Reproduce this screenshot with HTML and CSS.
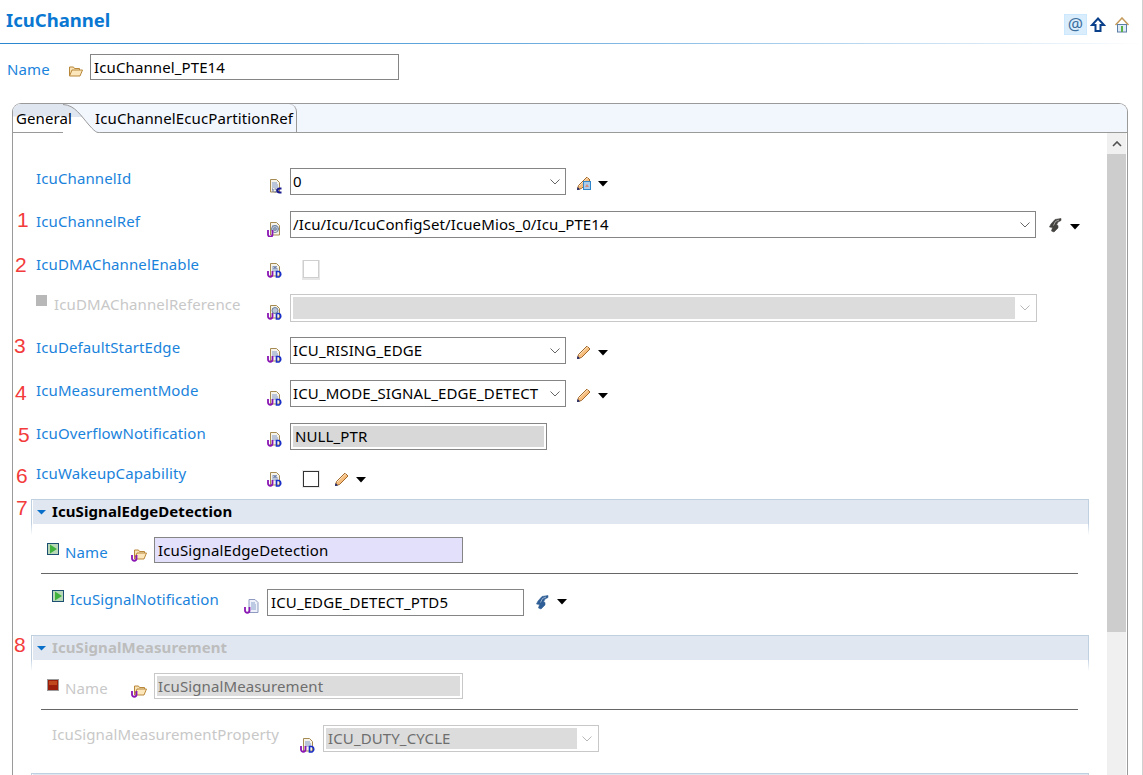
FILE: index.html
```html
<!DOCTYPE html>
<html lang="en">
<head>
<meta charset="utf-8">
<title>IcuChannel</title>
<link rel="stylesheet" href="styles.css">
</head>
<body>
<svg class="defs" width="0" height="0" aria-hidden="true">
  <defs>
    <linearGradient id="tabfill" gradientUnits="userSpaceOnUse" x1="0" y1="0" x2="0" y2="29">
      <stop offset="0" stop-color="#dfe6ef"/><stop offset=".44" stop-color="#dfe6ef"/><stop offset=".45" stop-color="#fff"/><stop offset="1" stop-color="#fff"/>
    </linearGradient>
    <symbol id="doc" viewBox="0 0 16 16">
      <path d="M3.500 1.500h6l3 3v9.500h-9z" fill="#f6f3ea" stroke="#a58a52"/>
      <path d="M5 5h5M5 7h6M5 9h6" stroke="#7f97c8"/>
    </symbol>
    <symbol id="i-int" viewBox="0 0 16 16">
      <use href="#doc"/>
      <path d="M5 11h1v3M7.500 11h2v3h-2" stroke="#5d6f9c" fill="none"/>
      <path d="M14.500 10.500h-2a2 2 0 0 0 0 4h2" fill="none" stroke="#1a1a90" stroke-width="2"/>
    </symbol>
    <symbol id="i-ref" viewBox="0 0 16 16">
      <use href="#doc"/>
      <circle cx="8" cy="8" r="3.500" fill="none" stroke="#6a7f9a"/>
      <circle cx="8" cy="8" r="1.300" fill="none" stroke="#6a7f9a"/>
      <path d="M1 9v4.500a2 2 0 0 0 4.500 0V9" fill="none" stroke="#8a16b4" stroke-width="1.800"/>
    </symbol>
    <symbol id="i-ud" viewBox="0 0 16 16">
      <use href="#doc"/>
      <path d="M1 9v3.500a2.200 2.200 0 0 0 4.500 0V9" fill="none" stroke="#8a16b4" stroke-width="1.800"/>
      <path d="M9.500 9.500h2.500a3 3 0 0 1 0 5.500h-2.500z" fill="none" stroke="#1a2fc8" stroke-width="1.600"/>
    </symbol>
    <symbol id="i-refud" viewBox="0 0 16 16">
      <use href="#i-ud"/>
      <circle cx="8" cy="6.500" r="3" fill="none" stroke="#6a7f9a"/>
    </symbol>
    <symbol id="i-bool" viewBox="0 0 16 16">
      <use href="#i-ud"/>
      <path d="M6.500 4l3 3M9.500 4l-3 3" stroke="#5d6f9c"/>
    </symbol>
    <symbol id="i-folder" viewBox="0 0 16 16">
      <path d="M1.500 13v-9h4l1 1.500h5v2.500" fill="#f7e3b5" stroke="#b9873a"/>
      <path d="M1.500 13l2.500-6h10.500l-2.500 6z" fill="#fbe7bb" stroke="#b9873a"/>
    </symbol>
    <symbol id="i-folderu" viewBox="0 0 16 16">
      <path d="M3.500 13v-9h4l1 1.500h5v2.500" fill="#f7e3b5" stroke="#b9873a"/>
      <path d="M3.500 13l2.500-6h9.500l-2.500 6z" fill="#fbe7bb" stroke="#b9873a"/>
      <path d="M1 9v3.500a2.200 2.200 0 0 0 4.500 0V9" fill="none" stroke="#8a16b4" stroke-width="1.800"/>
    </symbol>
    <symbol id="i-page" viewBox="0 0 16 16">
      <path d="M5 1.500h6l3 3v10h-9z" fill="#eef1fa" stroke="#8f9ac0"/>
      <path d="M7 5h4M7 7h5M7 9h5M7 11h5" stroke="#8ba0cc"/>
      <path d="M1 9v3.500a2.200 2.200 0 0 0 4.500 0V9" fill="none" stroke="#8a16b4" stroke-width="1.800"/>
    </symbol>
    <symbol id="i-pencil" viewBox="0 0 16 16">
      <path d="M1.500 14.500l1-4L11 2l3 3-8.500 8.500z" fill="#f6bd7c" stroke="#a2692c"/>
      <path d="M3 11l9-8.500" stroke="#fbe6c8"/>
      <path d="M1 15l.6-3 2.400 2.400z" fill="#16226e"/>
    </symbol>
    <symbol id="i-wand" viewBox="0 0 16 16">
      <use href="#i-pencil"/>
      <rect x="7.500" y="6.500" width="7" height="8" fill="#a9cdea" stroke="#2f86cc"/>
      <path d="M9 12l2-3 2 3z" fill="#d98b7a"/>
    </symbol>
    <symbol id="i-bolt" viewBox="0 0 16 16">
      <path d="M13 1.500L7 2.500 3 7l-1.500 3 3 .5-1 3.500 2.500 1L10 11V8.500L8.500 8 10 5l3-1.500z" fill="currentColor" stroke="currentColor" stroke-width=".6"/>
      <path d="M11 3L7.500 4.500 5.500 8.500" fill="none" stroke="#fff" stroke-opacity=".5"/>
    </symbol>
    <symbol id="i-green" viewBox="0 0 12 12">
      <rect x=".5" y=".5" width="11" height="11" fill="#b8d8b8" stroke="#1c4f72"/>
      <path d="M3 1.500l7 4.500-7 4.500z" fill="#3fb23c"/>
    </symbol>
    <symbol id="i-red" viewBox="0 0 12 12">
      <rect x=".5" y=".5" width="11" height="11" fill="#9b1d0c" stroke="#9a9a9a"/>
      <rect x="2" y="2" width="8" height="4" fill="#c0481e"/>
    </symbol>
    <symbol id="i-drop" viewBox="0 0 10 6"><path d="M0 0h10L5 5.500z" fill="#000"/></symbol>
    <symbol id="i-chev" viewBox="0 0 10 6"><path d="M.5 .5L5 5 9.500 .5" fill="none" stroke="currentColor"/></symbol>
    <symbol id="i-sec" viewBox="0 0 9 5"><path d="M0 0h9L4.500 4.500z" fill="#0a6fc9"/></symbol>
  </defs>
</svg>

<div class="page">
  <header class="head">
    <h1 class="title">IcuChannel</h1>
    <div class="tools">
      <span class="tool-at">@</span>
      <svg class="tool" viewBox="0 0 16 16"><path d="M8 1.500L14 8h-3.500v6h-5V8H2z" fill="#fff" stroke="#0a3f8a" stroke-width="2"/></svg>
      <svg class="tool" viewBox="0 0 16 16"><path d="M1.500 8l6.500-7 6.500 7" fill="none" stroke="#c49a5a" stroke-width="1.500"/><rect x="3.500" y="7.500" width="9" height="7.500" fill="#dfeaf7" stroke="#5c7fa8"/><rect x="7" y="9" width="2" height="6" fill="#5cb04a"/></svg>
    </div>
  </header>

  <div class="name-row">
    <span class="lbl name-lbl">Name</span>
    <svg class="ico"><use href="#i-folder"/></svg>
    <div class="box name-box">IcuChannel_PTE14</div>
  </div>

  <section class="folder">
    <div class="tabs">
      <div class="tab tab-on">General</div>
      <svg class="tab-curve" viewBox="0 0 40 29" preserveAspectRatio="none"><path d="M0 .5C12 1 18 12 26 21S34 28.500 40 28.500V29H0z" fill="url(#tabfill)"/><path d="M0 .5C12 1 18 12 26 21S34 28.500 40 28.500" fill="none" stroke="#9a9a9a"/></svg>
      <div class="tab tab-off">IcuChannelEcucPartitionRef</div>
    </div>
    <div class="body">
      <div class="form">
        <span class="num n1">1</span><span class="num n2">2</span><span class="num n3">3</span><span class="num n4">4</span>
        <span class="num n5">5</span><span class="num n6">6</span><span class="num n7">7</span><span class="num n8">8</span>

        <div class="row">
          <span class="lbl col">IcuChannelId</span>
          <svg class="ico"><use href="#i-int"/></svg>
          <div class="box combo w276"><span class="val">0</span><svg class="chev"><use href="#i-chev"/></svg></div>
          <svg class="act"><use href="#i-wand"/></svg><svg class="drop"><use href="#i-drop"/></svg>
        </div>
        <div class="row">
          <span class="lbl col">IcuChannelRef</span>
          <svg class="ico"><use href="#i-ref"/></svg>
          <div class="box combo w746"><span class="val">/Icu/Icu/IcuConfigSet/IcueMios_0/Icu_PTE14</span><svg class="chev"><use href="#i-chev"/></svg></div>
          <svg class="act bolt-dark"><use href="#i-bolt"/></svg><svg class="drop"><use href="#i-drop"/></svg>
        </div>
        <div class="row row-short">
          <span class="lbl col">IcuDMAChannelEnable</span>
          <svg class="ico"><use href="#i-bool"/></svg>
          <span class="check check-off"></span>
        </div>
        <div class="row">
          <span class="col col-off"><span class="square"></span><span class="lbl lbl-off">IcuDMAChannelReference</span></span>
          <svg class="ico"><use href="#i-refud"/></svg>
          <div class="box combo w747 box-off"><span class="val fill"></span><svg class="chev"><use href="#i-chev"/></svg></div>
        </div>
        <div class="row">
          <span class="lbl col">IcuDefaultStartEdge</span>
          <svg class="ico"><use href="#i-ud"/></svg>
          <div class="box combo w276"><span class="val">ICU_RISING_EDGE</span><svg class="chev"><use href="#i-chev"/></svg></div>
          <svg class="act"><use href="#i-pencil"/></svg><svg class="drop"><use href="#i-drop"/></svg>
        </div>
        <div class="row">
          <span class="lbl col">IcuMeasurementMode</span>
          <svg class="ico"><use href="#i-ud"/></svg>
          <div class="box combo w276"><span class="val">ICU_MODE_SIGNAL_EDGE_DETECT</span><svg class="chev"><use href="#i-chev"/></svg></div>
          <svg class="act"><use href="#i-pencil"/></svg><svg class="drop"><use href="#i-drop"/></svg>
        </div>
        <div class="row row-short">
          <span class="lbl col">IcuOverflowNotification</span>
          <svg class="ico"><use href="#i-ud"/></svg>
          <div class="box w257 box-gray"><span class="val fill">NULL_PTR</span></div>
        </div>
        <div class="row row-wake">
          <span class="lbl col">IcuWakeupCapability</span>
          <svg class="ico"><use href="#i-bool"/></svg>
          <span class="check"></span>
          <svg class="act act-check"><use href="#i-pencil"/></svg><svg class="drop"><use href="#i-drop"/></svg>
        </div>

        <section class="sec">
          <div class="sec-head"><svg class="sec-arrow"><use href="#i-sec"/></svg><span class="sec-title">IcuSignalEdgeDetection</span></div>
          <div class="sec-row">
            <svg class="state"><use href="#i-green"/></svg>
            <span class="lbl sec-name">Name</span>
            <svg class="ico"><use href="#i-folderu"/></svg>
            <div class="box name-box box-lilac">IcuSignalEdgeDetection</div>
          </div>
          <div class="rule"></div>
          <div class="sec-row sec-row-sub">
            <svg class="state state-sub"><use href="#i-green"/></svg>
            <span class="lbl sig-lbl">IcuSignalNotification</span>
            <svg class="ico"><use href="#i-page"/></svg>
            <div class="box w257">ICU_EDGE_DETECT_PTD5</div>
            <svg class="act bolt-blue"><use href="#i-bolt"/></svg><svg class="drop"><use href="#i-drop"/></svg>
          </div>
        </section>

        <section class="sec">
          <div class="sec-head"><svg class="sec-arrow"><use href="#i-sec"/></svg><span class="sec-title sec-title-off">IcuSignalMeasurement</span></div>
          <div class="sec-row">
            <svg class="state"><use href="#i-red"/></svg>
            <span class="lbl lbl-off sec-name">Name</span>
            <svg class="ico"><use href="#i-folderu"/></svg>
            <div class="box name-box box-off"><span class="val fill">IcuSignalMeasurement</span></div>
          </div>
          <div class="rule"></div>
          <div class="sec-row sec-row-sub">
            <span class="lbl lbl-off meas-lbl">IcuSignalMeasurementProperty</span>
            <svg class="ico"><use href="#i-ud"/></svg>
            <div class="box combo w276 box-off"><span class="val fill">ICU_DUTY_CYCLE</span><svg class="chev"><use href="#i-chev"/></svg></div>
          </div>
        </section>
        <section class="sec sec-next"><div class="sec-head"></div></section>
      </div>
      <div class="scroll">
        <div class="scroll-up"><svg class="scroll-chev" viewBox="0 0 10 6"><path d="M1 5L5 1l4 4" fill="none" stroke="#505050" stroke-width="1.600"/></svg></div>
        <div class="scroll-thumb"></div>
      </div>
    </div>
  </section>
</div>
</body>
</html>
```
FILE: styles.css
```css
* { box-sizing: border-box; }
html, body { margin: 0; height: 100%; background: #fff; overflow: hidden; }
body { font-family: "Noto Sans", "Open Sans", sans-serif; font-size: 15px; letter-spacing: .115px; color: #000; }
.defs { position: absolute; }
.page { width: 1143px; height: 775px; border-right: 1px solid #d0d0d0; display: flex; flex-direction: column; overflow: hidden; }

.head {
  height: 44px; flex: none; display: flex; justify-content: space-between; align-items: flex-start;
  padding: 7px 12px 0 6px; border-bottom: 1px solid transparent;
  border-image: linear-gradient(90deg, #2b86cf 0%, #69abdf 45%, #eef5fb 95%, #fff 100%) 1;
}
.title { margin: 0; font-size: 18.5px; letter-spacing: 0; line-height: 26px; font-weight: 700; color: #0a78d2; }
.tools { display: flex; align-items: center; gap: 8px; margin-top: 7px; }
.tool-at { width: 23px; height: 21px; background: #d9edfc; border: 1px solid #cce8ff; color: #3d6f9e; font-size: 17px; line-height: 17px; text-align: center; margin-right: -5px; }
.tool { width: 16px; height: 16px; }

.lbl { color: #1a83dc; white-space: nowrap; line-height: 20px; }
.lbl-off { color: #c8c8c8; }
.ico { width: 16px; height: 16px; flex: none; }

.box { height: 27px; border: 1px solid #858585; background: #fff; padding: 0 3px; line-height: 24px; white-space: nowrap; overflow: hidden; flex: none; }
.name-row { height: 59px; flex: none; padding: 10px 0 0 7px; display: flex; align-items: flex-start; }
.name-lbl { width: 61px; margin-top: 5px; }
.name-row .ico { margin-top: 9px; margin-right: 6px; }
.name-box { width: 309px; height: 26px; }

.folder { flex: 1; margin: 0 14px 0 12px; border: 1px solid #9a9a9a; border-bottom: 0; border-radius: 9px 9px 0 0; display: flex; flex-direction: column; min-height: 0; }
.tabs { height: 29px; flex: none; background: #f2f6fd; border-bottom: 1px solid #9a9a9a; border-radius: 8px 8px 0 0; display: flex; }
.tab { height: 28px; line-height: 28px; white-space: nowrap; }
.tab-on { width: 50px; padding-left: 3px; background: linear-gradient(#dfe6ef 0, #dfe6ef 12px, #fff 13px); border-radius: 8px 0 0 0; position: relative; z-index: 1; }
.tab-curve { width: 40px; height: 29px; flex: none; }
.tab-off { width: 202px; margin-left: -8px; border-right: 1px solid #9a9a9a; border-radius: 0 8px 0 0; position: relative; }

.body { flex: 1; display: flex; min-height: 0; }
.form { flex: 1; position: relative; padding: 35px 0 0 23px; min-width: 0; }
.scroll { width: 19px; flex: none; margin-right: 1px; background: #f0f0f0; }
.scroll-up { height: 21px; display: flex; align-items: center; justify-content: center; }
.scroll-chev { width: 10px; height: 6px; }
.scroll-thumb { height: 478px; background: #cdcdcd; }

.row { height: 43px; display: flex; align-items: flex-start; }
.row-short { height: 40px; }
.row-wake { height: 36px; }
.col { width: 231px; flex: none; }
.col-off { display: flex; align-items: flex-start; }
.square { width: 11px; height: 11px; background: #b8b8b8; margin-right: 7px; margin-top: 1px; }
.row > .ico { margin-top: 10px; margin-right: 7px; }
.row-short > .ico, .row-wake > .ico { margin-top: 8px; }

.combo { display: flex; align-items: stretch; padding: 0 5px 0 2px; justify-content: space-between; }
.val { line-height: 24px; min-width: 0; }
.chev { width: 10px; height: 6px; align-self: center; color: #666; flex: none; }
.w276 { width: 276px; }
.w746 { width: 746px; }
.w747 { width: 747px; height: 28px; }
.w257 { width: 257px; }
.box-off { border-color: #c8c8c8; padding: 2px; color: #6e6e6e; }
.box-off .val { line-height: 21px; }
.box-off .chev { color: #b8b8b8; margin: 0 4px 0 5px; }
.box-off .fill { flex: 1; background: #dcdcdc; display: block; padding-left: 2px; height: 100%; }
.name-box.box-off .fill { height: 100%; padding-left: 1px; }
.box-gray { padding: 2px; }
.box-gray .fill { display: block; height: 100%; background: #d8d8d8; line-height: 20px; padding-left: 2px; }
.box-lilac { background: #e2e0fb; }

.check { width: 16px; height: 16px; margin: 8px 0 0 13px; border: 1px solid #333; background: #fff; box-shadow: 0 0 0 1px #eaeaea; flex: none; }
.check-off { border-color: #cfcfcf; height: 18px; box-shadow: 0 1px 0 1px #e6e6e6; margin-top: 6px; }
.act { width: 16px; height: 16px; flex: none; margin: 7px 0 0 10px; }
.act-check { margin: 8px 0 0 15px; }
.drop { width: 10px; height: 6px; flex: none; margin: 13px 0 0 6px; }
.row .act-check + .drop { margin-top: 14px; }
.bolt-dark { color: #44423f; margin-left: 12px; margin-top: 6px; }
.bolt-blue { color: #2f5f96; margin-left: 11px; margin-top: 5px; }
.sec-row .drop { margin-top: 10px; }

.sec { width: 1058px; margin-left: -5px; border: solid transparent; border-width: 1px 1px 0; border-image: linear-gradient(#bfd0e0 0, #bfd0e0 24px, #fff 36px) 1; height: 136px; }
.sec + .sec { height: 138px; }
.sec-head { height: 24px; background: #e0e7f1; margin-left: 1px; display: flex; align-items: center; padding-left: 4px; }
.sec-arrow { width: 9px; height: 5px; flex: none; margin-right: 6px; }
.sec-title { font-weight: 700; letter-spacing: .09px; line-height: 22px; margin-top: -2px; }
.sec-title-off { color: #bdbdbd; }
.sec-row { display: flex; align-items: flex-start; height: 36px; margin-top: 13px; padding-left: 15px; }
.state { width: 12px; height: 12px; flex: none; margin: 6px 6px 0 0; }
.sec-name { width: 66px; margin-top: 5px; }
.sec-row > .ico { margin-top: 9px; margin-right: 7px; }
.rule { height: 1px; background: #666; margin-left: 9px; width: 1037px; }
.sec-row-sub { margin-top: 15px; height: 30px; }
.state-sub { margin: 1px 6px 0 5px; }
.sig-lbl { width: 174px; }
.meas-lbl { width: 248px; margin: -1px 0 0 5px; }
.meas-lbl + .ico { margin-top: 12px; }
.sec-next { height: 20px; }

.num { position: absolute; font-family: "Liberation Sans", sans-serif; font-size: 21px; letter-spacing: 0; line-height: 21px; color: #f33b3b; }
.n1 { left: 4px; top: 76px; }
.n2 { left: 2px; top: 121px; }
.n3 { left: 1px; top: 202px; }
.n4 { left: 2px; top: 249px; }
.n5 { left: 5px; top: 291px; }
.n6 { left: 3px; top: 332px; }
.n7 { left: 3px; top: 364px; }
.n8 { left: 1px; top: 501px; }
```
